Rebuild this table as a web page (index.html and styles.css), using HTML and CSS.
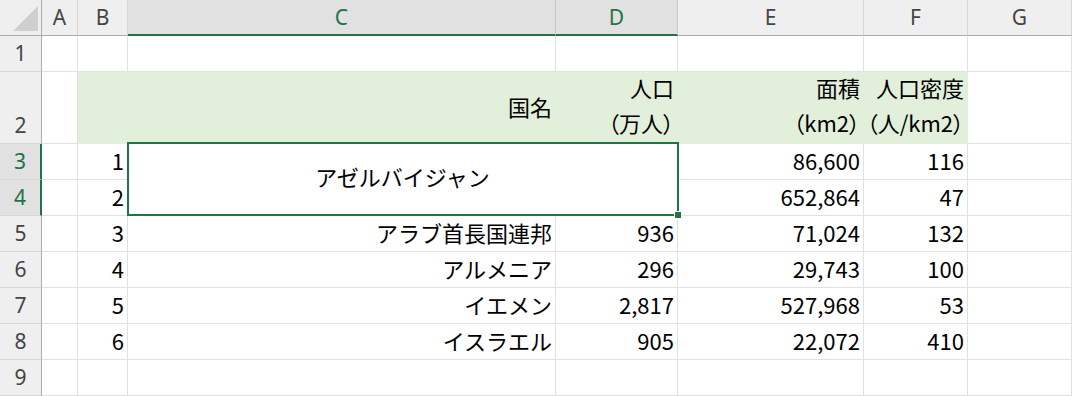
FILE: index.html
```html
<!DOCTYPE html>
<html lang="ja">
<head>
<meta charset="utf-8">
<title>Sheet</title>
<link rel="stylesheet" href="styles.css">
</head>
<body>
<div class="sheet">
  <div class="corner"><svg width="42" height="36" viewBox="0 0 42 36"><polygon points="38,6 38,31 13,31" fill="#cfcfcf"/></svg></div>
  <div class="ch">A</div>
  <div class="ch">B</div>
  <div class="ch sel">C</div>
  <div class="ch sel">D</div>
  <div class="ch">E</div>
  <div class="ch">F</div>
  <div class="ch">G</div>

  <div class="rh">1</div>
  <div class="c"></div><div class="c"></div><div class="c"></div><div class="c"></div><div class="c"></div><div class="c"></div><div class="c"></div>

  <div class="rh">2</div>
  <div class="c"></div>
  <div class="c fill"></div>
  <div class="c fill">国名</div>
  <div class="c fill wrap"><span>人口</span><span><span class="p">（</span>万人<span class="p">）</span></span></div>
  <div class="c fill wrap"><span>面積</span><span><span class="p">（</span>km2<span class="p">）</span></span></div>
  <div class="c fill wrap"><span>人口密度</span><span><span class="p">（</span>人/km2<span class="p">）</span></span></div>
  <div class="c"></div>

  <div class="rh rsel">3</div>
  <div class="c"></div>
  <div class="c">1</div>
  <div class="c merged"><span>アゼルバイジャン</span><div class="selbox"><div class="handle"></div></div></div>
  <div class="c">86,600</div>
  <div class="c">116</div>
  <div class="c"></div>

  <div class="rh rsel">4</div>
  <div class="c"></div>
  <div class="c">2</div>
  <div class="c">652,864</div>
  <div class="c">47</div>
  <div class="c"></div>

  <div class="rh">5</div>
  <div class="c"></div>
  <div class="c">3</div>
  <div class="c">アラブ首長国連邦</div>
  <div class="c">936</div>
  <div class="c">71,024</div>
  <div class="c">132</div>
  <div class="c"></div>

  <div class="rh">6</div>
  <div class="c"></div>
  <div class="c">4</div>
  <div class="c">アルメニア</div>
  <div class="c">296</div>
  <div class="c">29,743</div>
  <div class="c">100</div>
  <div class="c"></div>

  <div class="rh">7</div>
  <div class="c"></div>
  <div class="c">5</div>
  <div class="c">イエメン</div>
  <div class="c">2,817</div>
  <div class="c">527,968</div>
  <div class="c">53</div>
  <div class="c"></div>

  <div class="rh">8</div>
  <div class="c"></div>
  <div class="c">6</div>
  <div class="c">イスラエル</div>
  <div class="c">905</div>
  <div class="c">22,072</div>
  <div class="c">410</div>
  <div class="c"></div>

  <div class="rh">9</div>
  <div class="c"></div><div class="c"></div><div class="c"></div><div class="c"></div><div class="c"></div><div class="c"></div><div class="c"></div>
</div>
</body>
</html>
```

FILE: styles.css
```css
* { box-sizing: border-box; }
html, body { margin: 0; padding: 0; background: #fff; }
body {
  font-family: "Noto Sans CJK JP", "Noto Sans", sans-serif;
  font-size: 22px;
  color: #000;
  overflow: hidden;
}
.sheet {
  display: grid;
  grid-template-columns: 42px 36px 50px 428px 122px 186px 104px 104px;
  grid-template-rows: 36px 36px 72px repeat(7, 36px);
  width: 1072px;
  height: 396px;
}
.corner {
  background: #efefef;
  border-right: 1px solid #ababab;
  border-bottom: 1px solid #ababab;
}
.corner svg { display: block; }
.ch {
  background: #efefef;
  border-right: 1px solid #d6d6d6;
  border-bottom: 1px solid #ababab;
  font-family: "Noto Sans", "Open Sans", sans-serif;
  font-size: 21px;
  color: #444;
  display: flex;
  align-items: center;
  justify-content: center;
  line-height: 1;
  padding-bottom: 1px;
}
.ch.sel {
  background: #e1e1e1;
  color: #217346;
  border-right-color: #c6c6c6;
  border-bottom: 2px solid #217346;
  padding-bottom: 0;
}
.rh {
  background: #efefef;
  border-right: 1px solid #ababab;
  border-bottom: 1px solid #d6d6d6;
  font-family: "Noto Sans", "Open Sans", sans-serif;
  font-size: 21px;
  color: #444;
  display: flex;
  align-items: flex-end;
  justify-content: center;
  line-height: 35px;
}
.rh.rsel {
  background: #e1e1e1;
  color: #217346;
  border-right: 2px solid #217346;
}
.c {
  border-right: 1px solid #e1e1e1;
  border-bottom: 1px solid #e1e1e1;
  display: flex;
  align-items: center;
  justify-content: flex-end;
  padding: 0 3px 4px 0;
  white-space: nowrap;
  line-height: 36px;
}
.fill {
  background: #e2efda;
  border-right-color: #e2efda;
  border-bottom-color: #e2efda;
}
.wrap {
  flex-direction: column;
  align-items: flex-end;
  justify-content: flex-start;
  gap: 4px;
  padding: 0 3px 0 0;
  line-height: 31px;
}
.p { font-feature-settings: "palt" 1; }
.merged {
  grid-column: span 2;
  grid-row: span 2;
  justify-content: center;
  position: relative;
  padding: 0 0 7px 0;
}
.selbox {
  position: absolute;
  top: -2px;
  left: -1px;
  right: -2px;
  bottom: -1px;
  border: 2px solid #217346;
}
.handle {
  position: absolute;
  right: -5px;
  bottom: -5px;
  width: 8px;
  height: 8px;
  background: #217346;
  border: 1px solid #fff;
}
```
